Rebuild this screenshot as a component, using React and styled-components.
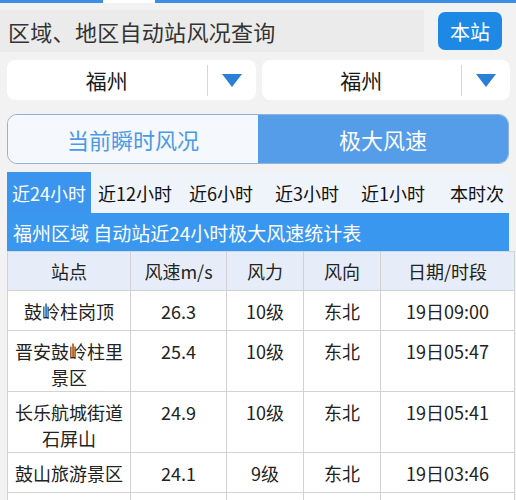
import React from 'react';
import styled, { createGlobalStyle } from 'styled-components';

const GlobalStyle = createGlobalStyle`
  html, body {
    margin: 0;
    padding: 0;
    background: #f2f2f2;
    font-family: 'Noto Sans CJK SC', 'Noto Sans', sans-serif;
    color: #222;
  }
`;

const Page = styled.div`
  width: 516px;
  height: 500px;
  overflow: hidden;
  background: #f2f2f2;
`;

const TopStrip = styled.div`
  display: flex;
  height: 3px;
`;

const StripPart = styled.div`
  width: ${(p) => (p.$w ? `${p.$w}px` : 'auto')};
  flex: ${(p) => (p.$w ? 'none' : 1)};
  background: ${(p) => (p.$light ? '#ffffff' : '#3a8ee6')};
`;

const SearchRow = styled.div`
  display: flex;
  align-items: center;
  margin-top: 7px;
  height: 42px;
`;

const SearchBox = styled.div`
  width: 424px;
  height: 42px;
  background: #ebebeb;
  display: flex;
  align-items: center;
  padding-left: 8px;
  box-sizing: border-box;
  font-size: 22px;
  color: #333;
  letter-spacing: 0.3px;
`;

const HomeButton = styled.button`
  margin-left: 14px;
  width: 64px;
  height: 38px;
  border: none;
  border-radius: 7px;
  background: #1e88e5;
  color: #fff;
  font-family: inherit;
  font-size: 20px;
  padding: 0;
`;

const SelectRow = styled.div`
  display: flex;
  gap: 6px;
  padding: 0 6px 0 7px;
  margin-top: 8px;
`;

const Select = styled.div`
  flex: 1;
  height: 40px;
  background: #fff;
  border-radius: 8px;
  display: flex;
  align-items: center;
`;

const SelectText = styled.div`
  flex: 1;
  text-align: center;
  font-size: 21px;
  color: #1a1a1a;
`;

const SelectArrow = styled.div`
  width: 48px;
  height: 31px;
  border-left: 1px solid #d6d6d6;
  display: flex;
  align-items: center;
  justify-content: center;
  svg {
    display: block;
  }
`;

const Toggle = styled.div`
  margin: 14px 7px 0 7px;
  height: 50px;
  border: 1.5px solid #8fb3db;
  border-radius: 10px;
  overflow: hidden;
  display: flex;
  box-sizing: border-box;
`;

const ToggleItem = styled.div`
  flex: 1;
  display: flex;
  align-items: center;
  justify-content: center;
  font-size: 22px;
  background: ${(p) => (p.$active ? '#559de8' : '#f5f8fc')};
  color: ${(p) => (p.$active ? '#ffffff' : '#4a9ae6')};
`;

const Tabs = styled.div`
  margin: 8px 7px 0 7px;
  height: 41px;
  background: #eff3fa;
  display: flex;
`;

const Tab = styled.div`
  padding: 0 5px;
  margin-left: ${(p) => p.$gap}px;
  display: flex;
  align-items: center;
  font-size: 18px;
  white-space: nowrap;
  background: ${(p) => (p.$active ? '#3b95ee' : 'transparent')};
  color: ${(p) => (p.$active ? '#ffffff' : '#111')};
`;

const Caption = styled.div`
  margin: 0 7px;
  height: 38px;
  background: #3a97f0;
  color: #fff;
  font-size: 19px;
  display: flex;
  align-items: center;
  padding-left: 6px;
`;

const Table = styled.table`
  margin: 0 7px;
  width: 502px;
  border-collapse: collapse;
  table-layout: fixed;
  background: #fff;
  border-top: 1px solid #cfd8e6;
`;

const Th = styled.th`
  height: 38px;
  padding: 0;
  font-weight: normal;
  font-size: 18px;
  color: #222;
  background: #e6edf8;
  border: 1px solid #d2d2d2;
  border-top: none;
  width: ${(p) => p.$w}px;
`;

const Td = styled.td`
  box-sizing: border-box;
  height: 40px;
  padding: 7px 4px 1px;
  font-size: 18px;
  line-height: 26px;
  text-align: center;
  vertical-align: top;
  color: #222;
  border: 1px solid #d2d2d2;
`;

const columns = [
  { name: '站点', w: 122 },
  { name: '风速m/s', w: 95 },
  { name: '风力', w: 76 },
  { name: '风向', w: 76 },
  { name: '日期/时段', w: 133 },
];

const rows = [
  ['鼓岭柱岗顶', '26.3', '10级', '东北', '19日09:00'],
  ['晋安鼓岭柱里景区', '25.4', '10级', '东北', '19日05:47'],
  ['长乐航城街道石屏山', '24.9', '10级', '东北', '19日05:41'],
  ['鼓山旅游景区', '24.1', '9级', '东北', '19日03:46'],
  ['', '', '', '', ''],
];

const tabs = [
  { label: '近24小时', gap: 0 },
  { label: '近12小时', gap: 2 },
  { label: '近6小时', gap: 7 },
  { label: '近3小时', gap: 12 },
  { label: '近1小时', gap: 12 },
  { label: '本时次', gap: 15 },
];

function Arrow() {
  return (
    <svg width="20" height="13" viewBox="0 0 20 13">
      <path d="M0 0 L20 0 L10 13 Z" fill="#2a7fd6" />
    </svg>
  );
}

function App() {
  return (
    <Page>
      <GlobalStyle />
      <TopStrip>
        <StripPart $w={103} />
        <StripPart $w={52} $light />
        <StripPart />
      </TopStrip>
      <SearchRow>
        <SearchBox>区域、地区自动站风况查询</SearchBox>
        <HomeButton>本站</HomeButton>
      </SearchRow>
      <SelectRow>
        <Select>
          <SelectText>福州</SelectText>
          <SelectArrow><Arrow /></SelectArrow>
        </Select>
        <Select>
          <SelectText>福州</SelectText>
          <SelectArrow><Arrow /></SelectArrow>
        </Select>
      </SelectRow>
      <Toggle>
        <ToggleItem>当前瞬时风况</ToggleItem>
        <ToggleItem $active>极大风速</ToggleItem>
      </Toggle>
      <Tabs>
        {tabs.map((t, i) => (
          <Tab key={t.label} $gap={t.gap} $active={i === 0}>{t.label}</Tab>
        ))}
      </Tabs>
      <Caption>福州区域 自动站近24小时极大风速统计表</Caption>
      <Table>
        <thead>
          <tr>
            {columns.map((c) => (
              <Th key={c.name} $w={c.w}>{c.name}</Th>
            ))}
          </tr>
        </thead>
        <tbody>
          {rows.map((r, ri) => (
            // eslint-disable-next-line react/no-array-index-key
            <tr key={ri}>
              {r.map((cell, i) => (
                <Td key={columns[i].name}>{cell}</Td>
              ))}
            </tr>
          ))}
        </tbody>
      </Table>
    </Page>
  );
}

export default App;
